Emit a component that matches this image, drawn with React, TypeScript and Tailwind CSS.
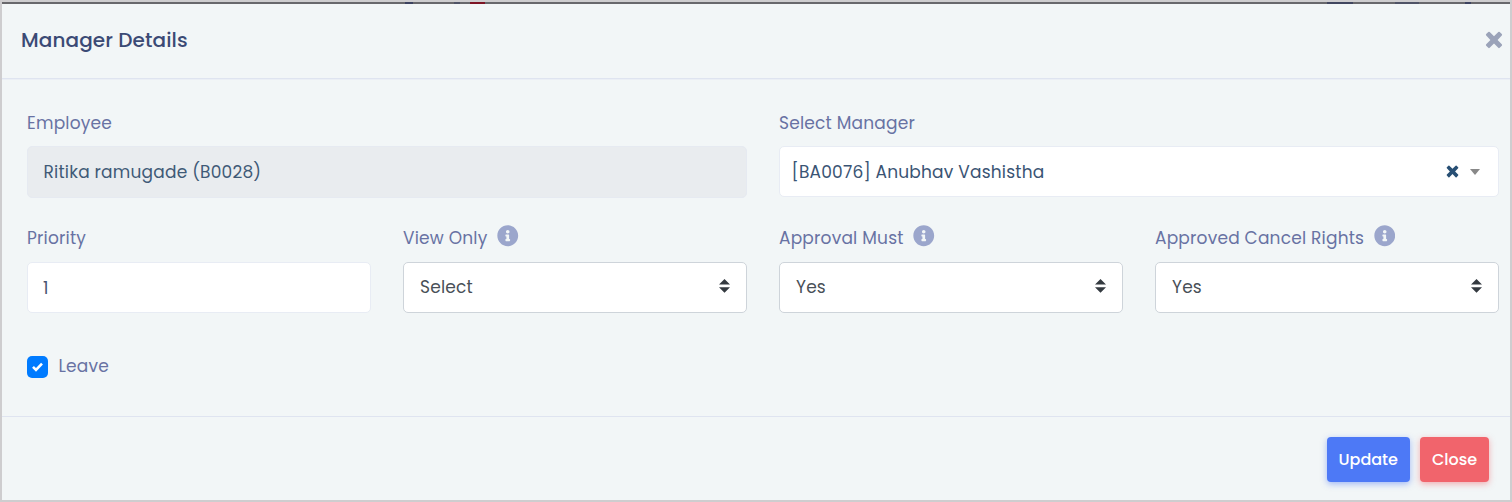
import { useState } from "react";
import type { ReactNode } from "react";
import { FaInfoCircle } from "react-icons/fa";

interface FieldLabelProps {
  children: ReactNode;
  info?: boolean;
}

function FieldLabel({ children, info }: FieldLabelProps) {
  return (
    <div className="flex h-[26px] items-center gap-[9.5px] text-[#6872a3]">
      <span className="whitespace-nowrap">{children}</span>
      {info && (
        <FaInfoCircle size={21.5} className="-mt-1 shrink-0 text-[#9ba6cc]" />
      )}
    </div>
  );
}

function CrossIcon({ size, className }: { size: number; className: string }) {
  return (
    <svg
      width={size}
      height={size}
      viewBox="0 0 18 18"
      fill="currentColor"
      className={className}
    >
      <path d="m4.7 1.1 4.3 4.2 4.3-4.2q.7-.6 1.4 0l2.1 2q.7.8 0 1.5L12.6 9l4.2 4.3q.7.7 0 1.4l-2.1 2.1q-.7.7-1.4 0L9 12.6l-4.3 4.2q-.7.7-1.4 0l-2.1-2.1q-.7-.7 0-1.4L5.4 9 1.2 4.6q-.7-.7 0-1.5l2.1-2q.7-.6 1.4 0z" />
    </svg>
  );
}

function SelectBox({ value }: { value: string }) {
  return (
    <button
      type="button"
      className="mt-[11px] flex h-[50.5px] w-full items-center justify-between rounded-[5px] border border-[#ced4da] bg-white px-4 pb-[2px] text-[#495057]"
    >
      <span className="pt-[2px]">{value}</span>
      <svg width="11" height="14" viewBox="0 0 11 14" fill="#343a40">
        <path d="M0 5.6 5.5 0 11 5.6zM0 8.2h11L5.5 13.8z" />
      </svg>
    </button>
  );
}

export default function App() {
  const [leave, setLeave] = useState(true);

  return (
    <div className="flex h-[502px] w-full flex-col border-2 border-[#cecdcf] bg-[#f2f6f7] font-[Poppins,Inter,sans-serif] text-[17px] leading-[26px] tracking-[0.2px]">
      {/* Sliver of the dimmed page behind the modal */}
      <div className="flex h-0.5 shrink-0 bg-[#68686c]">
        <div className="ml-[403px] h-0.5 w-2 bg-[#3d4360]" />
        <div className="ml-[41px] h-0.5 w-1.5 bg-[#4f5366]" />
        <div className="ml-[10px] h-0.5 w-[15px] bg-[#7d1424]" />
        <div className="ml-[842px] h-0.5 w-[26px] bg-[#41465f]" />
        <div className="ml-[42px] h-0.5 w-[24px] bg-[#4f5366]" />
        <div className="ml-[46px] h-0.5 w-1.5 bg-[#3d4360]" />
      </div>

      <header className="flex h-[75px] shrink-0 items-center justify-between border-b border-[#dfe4f0] pr-[7px] pb-[2px] pl-[19px] shadow-[0_1px_0_#ebeff5]">
        <h5 className="text-[20px] font-medium tracking-[0.1px] text-[#3b4a75]">
          Manager Details
        </h5>
        <button type="button" aria-label="Close dialog">
          <CrossIcon size={18} className="text-[#9ba3b9]" />
        </button>
      </header>

      <main className="h-[336.5px] shrink-0 pt-[31px] pr-[11.5px] pl-[25px]">
        <div className="grid grid-cols-2 gap-x-[32.5px]">
          <div>
            <FieldLabel>Employee</FieldLabel>
            <div className="mt-[10px] flex h-[52px] items-center rounded-[5px] border border-[#e6eaf1] bg-[#e9ecef] px-[15.5px] pb-px text-[#3f5a77]">
              Ritika ramugade (B0028)
            </div>
          </div>
          <div>
            <FieldLabel>Select Manager</FieldLabel>
            <div className="mt-[10px] flex h-[50.5px] items-center rounded-[5px] border border-[#e8ecf4] bg-white pr-[18px] pl-[11.5px] text-[#3a5474]">
              <span className="grow pt-px">[BA0076] Anubhav Vashistha</span>
              <CrossIcon size={13} className="mt-px text-[#274f74]" />
              <svg
                width="10"
                height="6"
                viewBox="0 0 10 6"
                fill="#888"
                className="mt-0.5 ml-[11px]"
              >
                <path d="M0 0h10L5 6z" />
              </svg>
            </div>
          </div>
        </div>

        <div className="mt-[27px] grid grid-cols-4 gap-x-[32.5px]">
          <div>
            <FieldLabel>Priority</FieldLabel>
            <input
              defaultValue="1"
              className="mt-[11px] block h-[51px] w-full rounded-[5px] border border-[#e8ecf4] bg-white px-[15px] text-[#475370] outline-none"
            />
          </div>
          <div>
            <FieldLabel info>View Only</FieldLabel>
            <SelectBox value="Select" />
          </div>
          <div>
            <FieldLabel info>Approval Must</FieldLabel>
            <SelectBox value="Yes" />
          </div>
          <div>
            <FieldLabel info>Approved Cancel Rights</FieldLabel>
            <SelectBox value="Yes" />
          </div>
        </div>

        <button
          type="button"
          role="checkbox"
          aria-checked={leave}
          onClick={() => setLeave(!leave)}
          className="mt-10 flex items-center text-[#6872a3]"
        >
          <span className="mt-0.5 flex h-[22px] w-[21px] items-center justify-center rounded-[5px] bg-[#007bff] text-white">
            {leave && (
              <svg
                width="11"
                height="10"
                viewBox="0 0 11 10"
                fill="none"
                stroke="currentColor"
                strokeWidth="2.6"
              >
                <path d="m1 4.9 3 3L10 1.7" />
              </svg>
            )}
          </span>
          <span className="ml-[10.5px]">Leave</span>
        </button>
      </main>

      <footer className="flex grow items-start justify-end gap-[10.5px] border-t border-[#dfe4f0] pt-[20.5px] pr-[21px] text-[16px] font-medium tracking-normal text-white">
        <button
          type="button"
          className="h-[45px] w-[82.5px] rounded-[4px] bg-[#4d79f6] shadow-[0_2px_6px_rgba(77,121,246,0.5)]"
        >
          Update
        </button>
        <button
          type="button"
          className="h-[45px] w-[69px] rounded-[4px] bg-[#f1646c] shadow-[0_2px_6px_rgba(241,100,108,0.5)]"
        >
          Close
        </button>
      </footer>
    </div>
  );
}
